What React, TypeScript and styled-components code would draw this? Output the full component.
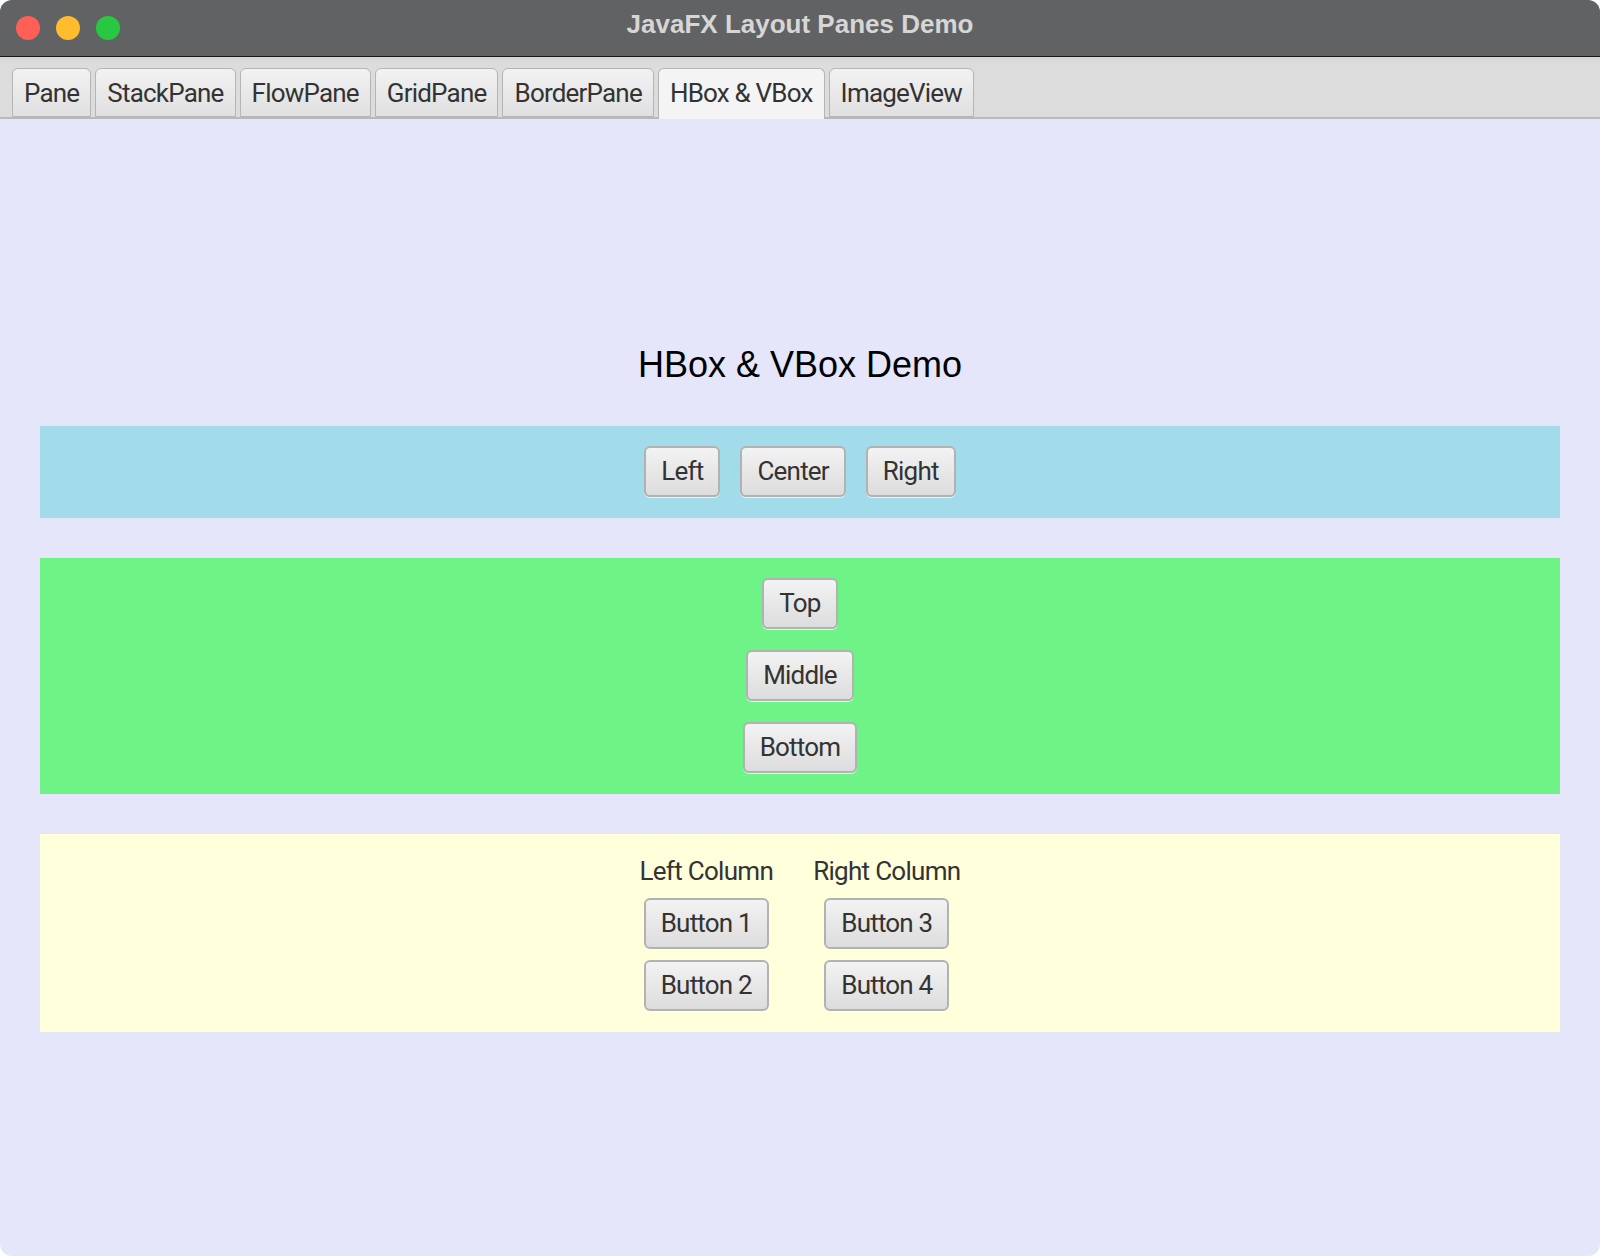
import React from "react";
import styled, { createGlobalStyle } from "styled-components";

const GlobalStyle = createGlobalStyle`
  html, body {
    margin: 0;
    padding: 0;
    background: #ffffff;
  }
  body {
    font-family: Roboto, "Liberation Sans", sans-serif;
  }
`;

const tabs = [
  "Pane",
  "StackPane",
  "FlowPane",
  "GridPane",
  "BorderPane",
  "HBox & VBox",
  "ImageView",
];

const Window = styled.div`
  width: 1600px;
  height: 1256px;
  border-radius: 12px;
  overflow: hidden;
  display: flex;
  flex-direction: column;
  background: #e6e6fb;
`;

const TitleBar = styled.div`
  height: 56px;
  flex-shrink: 0;
  background: #616264;
  border-bottom: 1px solid #161616;
  display: grid;
  grid-template-columns: 1fr auto 1fr;
  align-items: center;
`;

const Lights = styled.div`
  display: flex;
  gap: 16px;
  padding-left: 16px;
`;

const Light = styled.span<{ color: string }>`
  width: 24px;
  height: 24px;
  border-radius: 50%;
  background: ${(p) => p.color};
`;

const WindowTitle = styled.div`
  font-family: "Liberation Sans", Arial, sans-serif;
  font-weight: bold;
  font-size: 26px;
  line-height: 1;
  color: #d6d6d6;
  padding-bottom: 8px;
`;

const TabHeader = styled.div`
  height: 60px;
  flex-shrink: 0;
  background: linear-gradient(#d6d6d6 0px, #dcdcdc 6px, #dcdcdc 100%);
  border-bottom: 2px solid #b9b9b9;
  display: flex;
  align-items: flex-end;
  gap: 4px;
  padding: 0 12px;
`;

const Tab = styled.div<{ selected?: boolean }>`
  box-sizing: border-box;
  height: ${(p) => (p.selected ? "51px" : "49px")};
  margin-bottom: ${(p) => (p.selected ? "-2px" : "0")};
  padding: 0 11px;
  padding-bottom: ${(p) => (p.selected ? "2px" : "0")};
  display: flex;
  align-items: center;
  border: 1.5px solid #b5b5b5;
  border-bottom: ${(p) => (p.selected ? "none" : "1.5px solid #b5b5b5")};
  border-radius: 6px 6px 0 0;
  background: ${(p) =>
    p.selected ? "#f4f4f4" : "linear-gradient(#f2f2f2, #e0e0e0)"};
  font-size: 26px;
  letter-spacing: -0.8px;
  color: #333333;
  white-space: nowrap;
  position: relative;
`;

const Content = styled.div`
  flex: 1;
  display: flex;
  flex-direction: column;
  justify-content: center;
  gap: 40px;
  padding: 0 40px;
`;

const Heading = styled.div`
  font-family: "Liberation Sans", Arial, sans-serif;
  font-size: 36px;
  line-height: 42px;
  color: #000000;
  text-align: center;
`;

const Panel = styled.div<{ bg: string }>`
  background: ${(p) => p.bg};
  padding: 20px;
  display: flex;
  justify-content: center;
`;

const HRow = styled.div<{ spacing: number }>`
  display: flex;
  align-items: flex-start;
  gap: ${(p) => p.spacing}px;
`;

const VColumn = styled.div<{ spacing: number }>`
  display: flex;
  flex-direction: column;
  align-items: center;
  gap: ${(p) => p.spacing}px;
`;

const Button = styled.button`
  box-sizing: border-box;
  height: 51px;
  margin: 0 0 1px;
  padding: 0 15px;
  border: 2px solid #b2b2b2;
  border-radius: 6px;
  background: linear-gradient(#f3f3f3, #dcdcdc);
  box-shadow: 0 1px 0 rgba(255, 255, 255, 0.75);
  font-family: Roboto, "Liberation Sans", sans-serif;
  font-size: 26px;
  letter-spacing: -0.8px;
  color: #333333;
  cursor: pointer;
`;

const ColumnLabel = styled.div`
  height: 34px;
  line-height: 34px;
  font-size: 26px;
  letter-spacing: -0.7px;
  color: #333333;
  white-space: nowrap;
`;

const App: React.FC = () => {
  return (
    <>
      <GlobalStyle />
      <Window>
        <TitleBar>
          <Lights>
            <Light color="#fe5f57" />
            <Light color="#febc2e" />
            <Light color="#28c840" />
          </Lights>
          <WindowTitle>JavaFX Layout Panes Demo</WindowTitle>
          <div />
        </TitleBar>
        <TabHeader>
          {tabs.map((t) => (
            <Tab key={t} selected={t === "HBox & VBox"}>
              {t}
            </Tab>
          ))}
        </TabHeader>
        <Content>
          <Heading>HBox &amp; VBox Demo</Heading>
          <Panel bg="#a2dbe9">
            <HRow spacing={20}>
              <Button>Left</Button>
              <Button>Center</Button>
              <Button>Right</Button>
            </HRow>
          </Panel>
          <Panel bg="#6ef387">
            <VColumn spacing={20}>
              <Button>Top</Button>
              <Button>Middle</Button>
              <Button>Bottom</Button>
            </VColumn>
          </Panel>
          <Panel bg="#ffffdc">
            <HRow spacing={40}>
              <VColumn spacing={10}>
                <ColumnLabel>Left Column</ColumnLabel>
                <Button>Button 1</Button>
                <Button>Button 2</Button>
              </VColumn>
              <VColumn spacing={10}>
                <ColumnLabel>Right Column</ColumnLabel>
                <Button>Button 3</Button>
                <Button>Button 4</Button>
              </VColumn>
            </HRow>
          </Panel>
        </Content>
      </Window>
    </>
  );
};

export default App;
